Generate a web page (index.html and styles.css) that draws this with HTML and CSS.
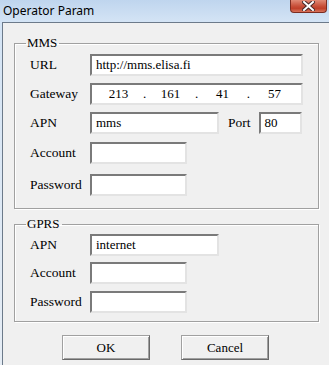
FILE: index.html
```html
<!DOCTYPE html>
<html lang="en">
    <head>
        <meta charset="utf-8">
        <title>Operator Param</title>
        <link rel="stylesheet" href="styles.css">
    </head>
    <body>
        <div class="window">
            <div class="titlebar">
                <span class="title">Operator Param</span>
                <span class="close">
                    <svg width="13" height="10" viewBox="0 0 13 10">
                        <path d="M2 1 L11 9 M11 1 L2 9" stroke="#4a2a2a" stroke-width="4" stroke-linecap="square"/>
                        <path d="M2 1 L11 9 M11 1 L2 9" stroke="#fff" stroke-width="2" stroke-linecap="square"/>
                    </svg>
                </span>
            </div>

            <div class="client">
                <fieldset class="group mms">
                    <legend>MMS</legend>
                    <div class="row">
                        <label>URL</label>
                        <div class="field wide">http://mms.elisa.fi</div>
                    </div>
                    <div class="row">
                        <label>Gateway</label>
                        <div class="field wide ip">
                            <span class="oct">213</span><span class="dot">.</span>
                            <span class="oct">161</span><span class="dot">.</span>
                            <span class="oct">41</span><span class="dot">.</span>
                            <span class="oct">57</span>
                        </div>
                    </div>
                    <div class="row">
                        <label>APN</label>
                        <div class="field mid">mms</div>
                        <label class="port-label">Port</label>
                        <div class="field port">80</div>
                    </div>
                    <div class="row acct">
                        <label>Account</label>
                        <div class="field short"></div>
                    </div>
                    <div class="row pwd">
                        <label>Password</label>
                        <div class="field short"></div>
                    </div>
                </fieldset>

                <fieldset class="group gprs">
                    <legend>GPRS</legend>
                    <div class="row">
                        <label>APN</label>
                        <div class="field mid">internet</div>
                    </div>
                    <div class="row gacct">
                        <label>Account</label>
                        <div class="field short"></div>
                    </div>
                    <div class="row">
                        <label>Password</label>
                        <div class="field short"></div>
                    </div>
                </fieldset>

                <div class="buttons">
                    <button class="btn">OK</button>
                    <button class="btn">Cancel</button>
                </div>
            </div>
        </div>
    </body>
</html>
```

FILE: styles.css
```css
html, body {
    margin: 0;
    padding: 0;
}

body {
    width: 329px;
    height: 365px;
    overflow: hidden;
    font-family: "Liberation Serif", "Times New Roman", serif;
    font-size: 13px;
    color: #000;
}

.window {
    height: 365px;
    background: linear-gradient(#bfd5ee, #d4e4f5 22px, #e6edf5);
}

.titlebar {
    height: 22px;
    display: flex;
    align-items: flex-start;
}

.title {
    font-family: "Noto Sans", sans-serif;
    font-size: 12px;
    line-height: 16px;
    margin: 3px 0 0 3px;
}

.close {
    margin-left: auto;
    margin-right: 2px;
    width: 37px;
    height: 13px;
    box-sizing: border-box;
    border: 1px solid #7b2d22;
    border-top: none;
    border-radius: 0 0 4px 4px;
    background: linear-gradient(#e08a76, #c8503a 50%, #c0402a 70%, #d8745c);
    display: flex;
    align-items: center;
    justify-content: center;
}

.client {
    margin-left: 2px;
    height: 342px;
    background: #f0f0f0;
    border-top: 1px solid #6c7a8a;
    border-left: 1px solid #6c7a8a;
    padding: 12px 10px 0 11px;
}

.group {
    box-sizing: border-box;
    margin: 0;
    padding: 3px 0 0 15px;
    border: 1px solid #a0a0a0;
    box-shadow: inset 1px 1px 0 #fff, 1px 1px 0 #fff;
}

.group legend {
    margin-left: -4px;
    padding: 0 2px 0 1px;
    line-height: 16px;
}

.mms {
    height: 174px;
}

.gprs {
    margin-top: 7px;
    padding-top: 2px;
    height: 106px;
}

.row {
    display: flex;
    align-items: center;
    height: 22px;
}

.row + .row {
    margin-top: 7px;
}

.row.acct {
    margin-top: 8px;
}

.row.pwd {
    margin-top: 10px;
}

.row.gacct {
    margin-top: 6px;
}

.row label {
    width: 60px;
    flex: none;
    font-size: 13.5px;
}

.field {
    height: 22px;
    box-sizing: border-box;
    background: #fff;
    border: 2px solid;
    border-color: #7a7a7a #e3e3e3 #e3e3e3 #7a7a7a;
    padding: 0 4px;
    line-height: 18px;
    white-space: nowrap;
}

.wide {
    width: 213px;
}

.mid {
    width: 129px;
}

.short {
    width: 97px;
}

.row .port-label {
    width: auto;
    margin-left: 9px;
}

.port {
    width: 43px;
    margin-left: 8px;
}

.ip {
    display: flex;
    padding-left: 4px;
}

.oct {
    width: 46px;
    text-align: center;
}

.dot {
    width: 7px;
    text-align: center;
}

.buttons {
    display: flex;
    gap: 31px;
    margin-top: 13px;
    padding-left: 48px;
}

.btn {
    width: 88px;
    height: 25px;
    margin: 0;
    padding: 0;
    font-family: "Liberation Serif", "Times New Roman", serif;
    font-size: 13px;
    color: #000;
    background: #f0f0f0;
    border: 1px solid;
    border-color: #a0a0a0 #696969 #696969 #a0a0a0;
    box-shadow: inset 1px 1px 0 #fff, inset -1px -1px 0 #a0a0a0;
}
```
